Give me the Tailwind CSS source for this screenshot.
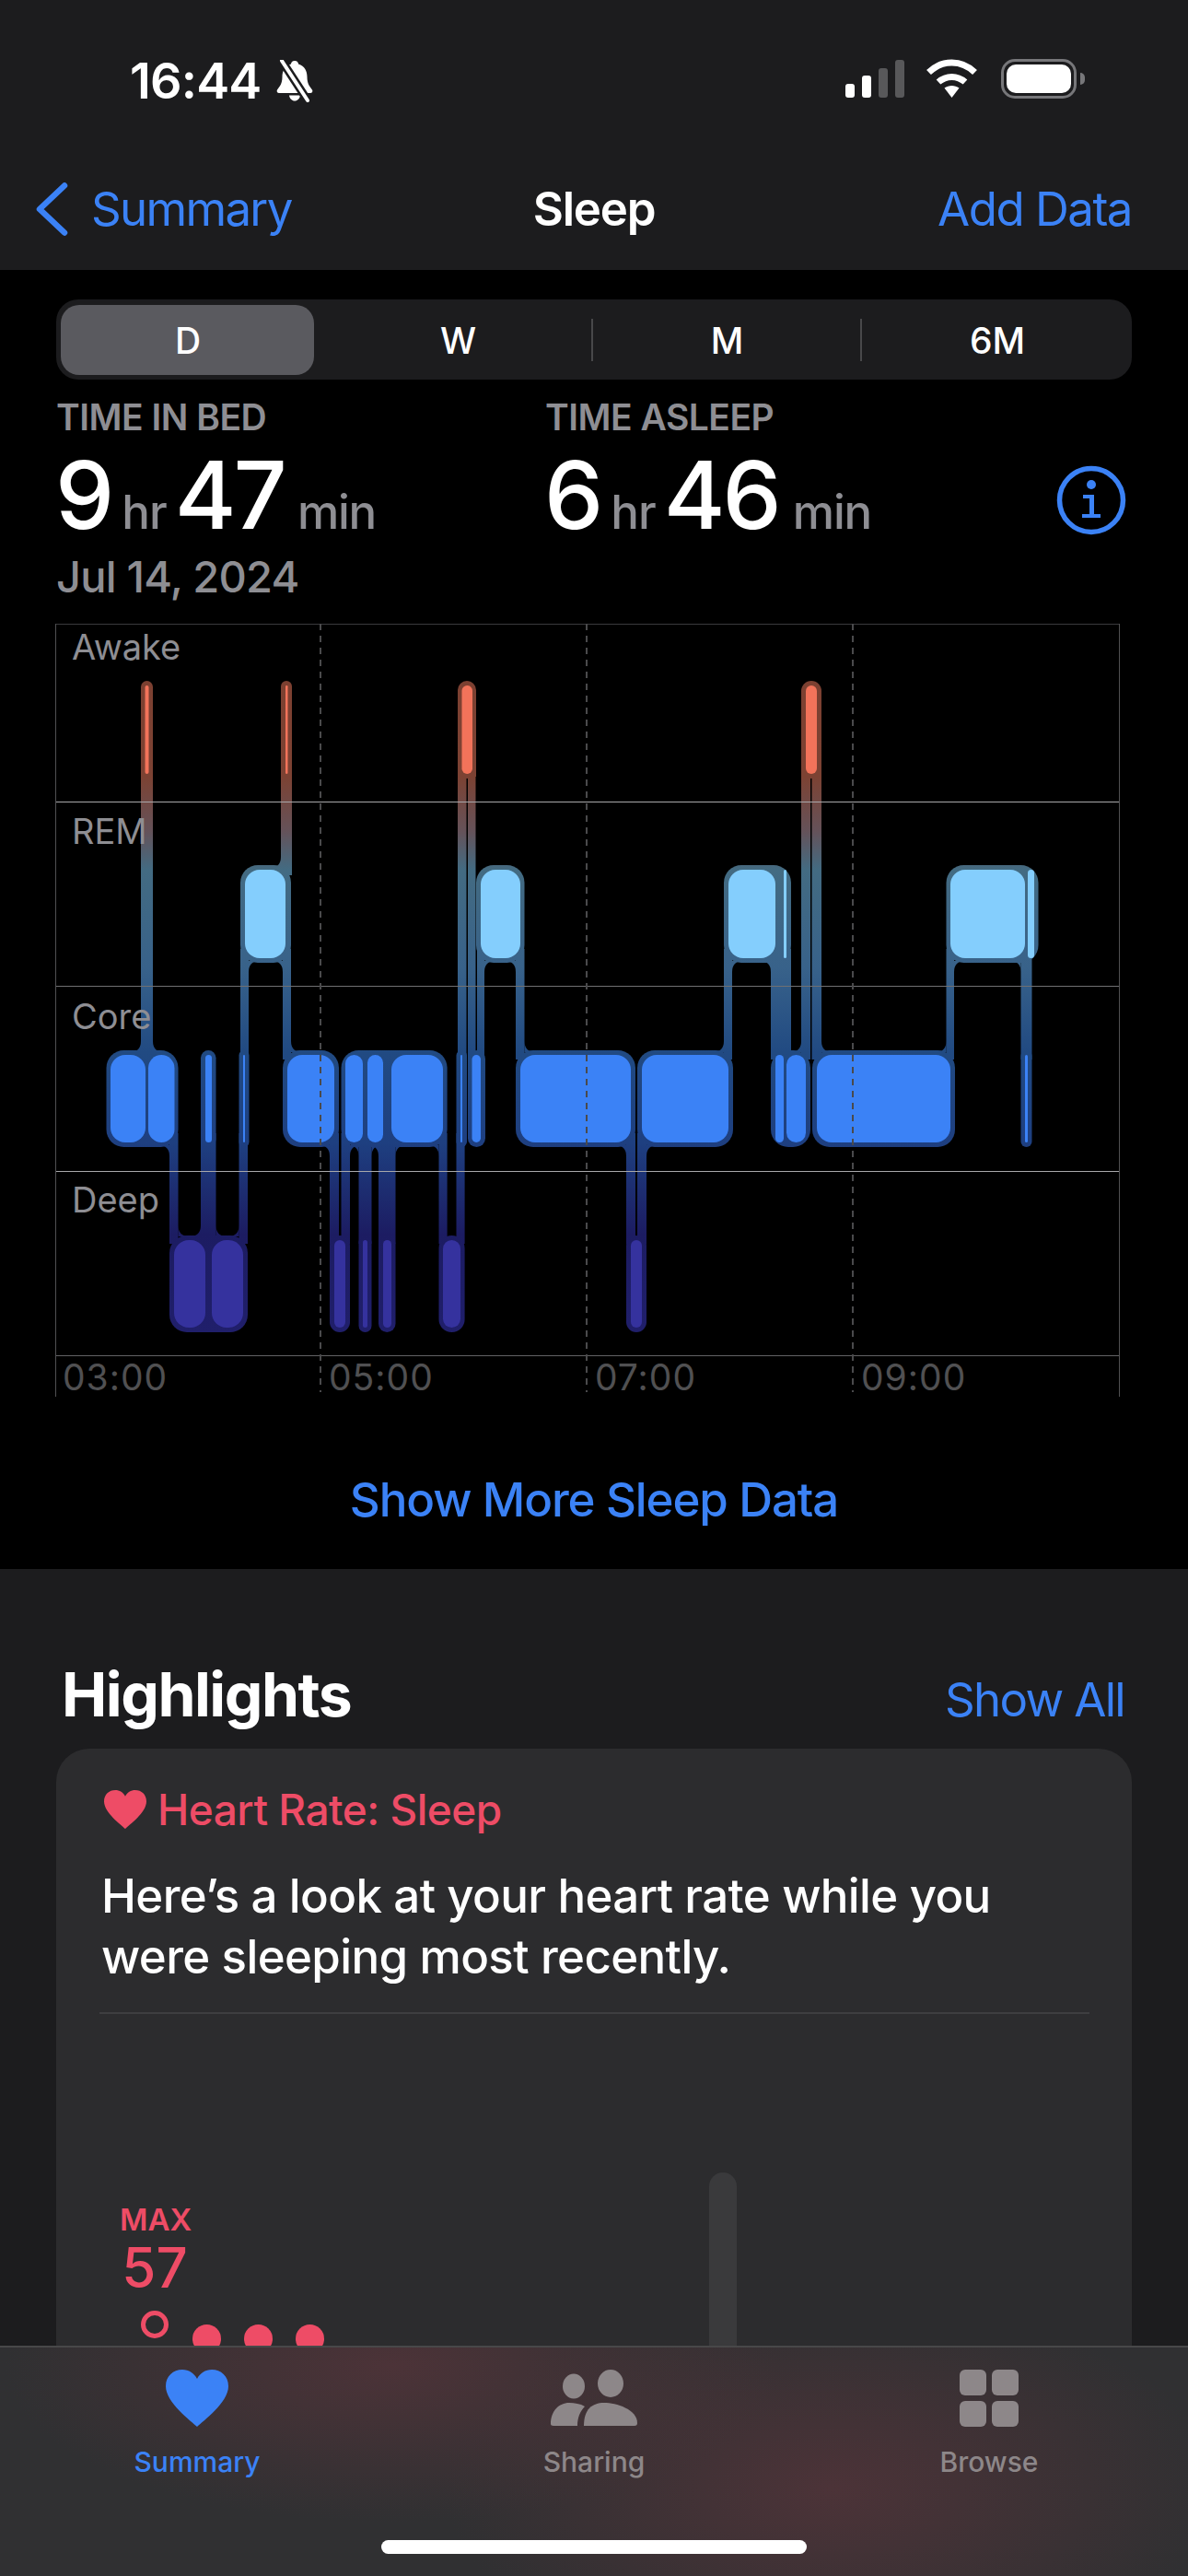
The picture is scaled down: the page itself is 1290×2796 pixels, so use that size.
<!DOCTYPE html>
<html lang="en">
<head>
    <meta charset="UTF-8">
    <title>Sleep</title>
    <script src="https://cdn.jsdelivr.net/npm/@tailwindcss/browser@4"></script>
</head>
<body class="bg-black">
<div class="relative w-[1290px] h-[2796px] overflow-hidden bg-[#1c1c1e] font-[Inter,sans-serif] text-white">

    <!-- Status bar + nav -->
    <header class="h-[293px] bg-[#1c1c1e]">
        <div class="h-[187px] flex items-start justify-between pl-[141px] pr-[112px] pt-[60px]">
            <div class="flex items-center gap-[14px]">
                <span class="text-[54px] leading-[56px] font-semibold tracking-[-0.800px]">16:44</span>
                <svg width="44" height="46" viewBox="0 0 44 46" fill="none">
                    <path d="M22 1c2.500 0 4 1.800 4 3.500 7 2 9.500 8 9.500 14 0 7 2.500 10 5.500 14 1 1.500 0 3.500-2 3.500H5c-2 0-3-2-2-3.500 3-4 5.500-7 5.500-14 0-6 2.500-12 9.500-14C18 2.800 19.500 1 22 1z" fill="#fff"/>
                    <path d="M16 38.500h12c-.5 3.500-3 6-6 6s-5.500-2.500-6-6z" fill="#fff"/>
                    <path d="M8 1l28 43" stroke="#1c1c1e" stroke-width="9"/>
                    <path d="M8 1l28 43" stroke="#fff" stroke-width="4" stroke-linecap="round"/>
                </svg>
            </div>
            <div class="flex items-start">
                <div class="flex items-end gap-[8px] h-[41px] mt-[5px]">
                    <div class="w-[10px] h-[15px] rounded-[3px] bg-white"></div>
                    <div class="w-[10px] h-[24px] rounded-[3px] bg-white"></div>
                    <div class="w-[10px] h-[32px] rounded-[3px] bg-[#58585a]"></div>
                    <div class="w-[10px] h-[41px] rounded-[3px] bg-[#58585a]"></div>
                </div>
                <svg class="ml-[23px] mt-[4px]" width="57" height="42" viewBox="0 0 57 42" fill="none">
                    <path d="M3.500 14.500C18 .5 39 .5 53.500 14.500" stroke="#fff" stroke-width="7"/>
                    <path d="M14 25c8.500-7.500 20.500-7.500 29 0" stroke="#fff" stroke-width="7"/>
                    <path d="M20.500 31.500c4.500-3.500 11.500-3.500 16 0L28.500 42z" fill="#fff"/>
                </svg>
                <div class="ml-[25px] mt-[4px] w-[82px] h-[43px] rounded-[15px] border-[3px] border-[#77777a] p-[3px]">
                    <div class="w-full h-full rounded-[10px] bg-white"></div>
                </div>
                <div class="ml-[4px] mt-[19px] w-[5px] h-[13px] rounded-r-full bg-[#77777a]"></div>
            </div>
        </div>
        <nav class="relative h-[80px] flex items-center justify-between pl-[38px] pr-[61px]">
            <div class="flex items-center gap-[25px] text-[#3b82f6]">
                <svg width="36" height="58" viewBox="0 0 36 58" fill="none"><path d="M32 3.500L5 29l27 25.500" stroke="#3b82f6" stroke-width="6.500" stroke-linecap="round" stroke-linejoin="round"/></svg>
                <span class="text-[51px] leading-[60px] tracking-[-1.700px]">Summary</span>
            </div>
            <span class="absolute left-0 right-0 text-center text-[51px] leading-[60px] font-semibold tracking-[-1.200px]">Sleep</span>
            <span class="text-[51px] leading-[60px] text-[#3b82f6] tracking-[-1.500px]">Add Data</span>
        </nav>
    </header>

    <!-- Sleep summary -->
    <section class="h-[1410px] bg-black">
        <div class="mx-[61px] mt-0 pt-[32px]">
            <div class="relative h-[87px] w-[1168px] rounded-[24px] bg-[#1c1c1e] grid grid-cols-4 items-center text-center text-[39px] font-medium pt-[4px]">
                <div class="absolute left-[5px] top-[6px] w-[275px] h-[76px] rounded-[20px] bg-[#5a5a5f]"></div>
                <div class="absolute left-[581px] top-[21px] w-[2px] h-[46px] bg-[#48484a]"></div>
                <div class="absolute left-[873px] top-[21px] w-[2px] h-[46px] bg-[#48484a]"></div>
                <span class="relative -ml-[6px]">D</span>
                <span class="relative -ml-[3px]">W</span>
                <span class="relative -ml-[3px]">M</span>
                <span class="relative">6M</span>
            </div>
        </div>
        <div class="relative mx-[61px] mt-[19px] flex">
            <div class="w-[531px]">
                <div class="text-[39px] leading-[44px] font-semibold text-[#8e8e93] tracking-[-0.500px]">TIME IN BED</div>
                <div class="flex items-baseline mt-[17px] h-[90px] -ml-[1px]">
                    <span class="text-[102px] leading-[90px] font-medium tracking-[-2px]">9</span>
                    <span class="text-[51px] font-medium text-[#8e8e93] ml-[10px] tracking-[-1px]">hr</span>
                    <span class="text-[102px] leading-[90px] font-medium ml-[9px] tracking-[-3px]">47</span>
                    <span class="text-[51px] font-medium text-[#8e8e93] ml-[14px] tracking-[-1.200px]">min</span>
                </div>
            </div>
            <div>
                <div class="text-[39px] leading-[44px] font-semibold text-[#8e8e93] tracking-[-0.500px]">TIME ASLEEP</div>
                <div class="flex items-baseline mt-[17px] h-[90px] -ml-[1px]">
                    <span class="text-[102px] leading-[90px] font-medium tracking-[-2px]">6</span>
                    <span class="text-[51px] font-medium text-[#8e8e93] ml-[10px] tracking-[-1px]">hr</span>
                    <span class="text-[102px] leading-[90px] font-medium ml-[9px] tracking-[-3px]">46</span>
                    <span class="text-[51px] font-medium text-[#8e8e93] ml-[15px] tracking-[-1.200px]">min</span>
                </div>
            </div>
            <svg class="absolute left-[1086px] top-[74px]" width="76" height="76" viewBox="0 0 76 76" fill="none">
                <circle cx="38" cy="38" r="34.500" stroke="#3b82f6" stroke-width="5.500"/>
                <circle cx="38" cy="21" r="5" fill="#3b82f6"/>
                <path d="M29 32h12v21h7v4H28v-4h8V36h-7z" fill="#3b82f6"/>
            </svg>
        </div>
        <div class="mx-[61px] mt-[17px] text-[47px] leading-[54px] font-medium text-[#8e8e93] tracking-[-0.800px]">Jul 14, 2024</div>

        <!-- Chart: drawn in page coordinates -->
        <svg id="sleepChart" class="block mt-[17px]" width="1290" height="850" viewBox="0 670 1290 850"></svg>

        <div class="mt-[78px] text-center text-[51px] leading-[60px] font-medium text-[#3b82f6] tracking-[-1.100px]">Show More Sleep Data</div>
    </section>

    <!-- Highlights -->
    <section class="px-[61px] pt-[98px]">
        <div class="flex items-baseline justify-between pr-[8px] pl-[6px] h-[97px]">
            <h2 class="text-[66px] leading-[76px] font-bold tracking-[-1.500px]">Highlights</h2>
            <span class="text-[51px] text-[#3b82f6] tracking-[-1.700px]">Show All</span>
        </div>
        <div class="h-[800px] rounded-[36px] bg-[#2c2c2e] px-[49px] pt-[40px]">
            <div class="flex items-center gap-[12px]">
                <svg class="ml-[3px]" width="46" height="42" viewBox="0 0 68 62"><path d="M34 62C28 56 0 36 0 18 0 7 8 0 18 0c7 0 13 4 16 10 3-6 9-10 16-10 10 0 18 7 18 18 0 18-28 38-34 44z" fill="#ee4c66"/></svg>
                <span class="text-[46px] leading-[52px] font-medium text-[#ee4c66] tracking-[-0.500px]">Heart Rate: Sleep</span>
            </div>
            <p class="mt-[35px] text-[51px] leading-[66px] font-medium tracking-[-0.620px]">Here’s a look at your heart rate while you<br>were sleeping most recently.</p>
            <div class="mt-[27px] -mx-[2px] w-[1075px] h-[2px] bg-[#3e3e40]"></div>
            <div class="relative h-[400px]">
                <div class="absolute left-[660px] top-[172px] w-[30px] h-[260px] rounded-t-full bg-[#3a3a3c]"></div>
                <div class="absolute left-[20px] top-[206px] w-[76px] text-center text-[#ee4c66]">
                    <div class="text-[33px] leading-[34px] font-semibold">MAX</div>
                    <div class="text-[60px] leading-[70px] font-medium">57</div>
                </div>
                <div class="absolute left-[43px] top-[322px] w-[30px] h-[30px] rounded-full border-[5px] border-[#ee4c66]"></div>
                <div class="absolute left-[99px] top-[337px] flex gap-[25px]">
                    <div class="w-[31px] h-[31px] rounded-full bg-[#ee4c66]"></div>
                    <div class="w-[31px] h-[31px] rounded-full bg-[#ee4c66]"></div>
                    <div class="w-[31px] h-[31px] rounded-full bg-[#ee4c66]"></div>
                </div>
            </div>
        </div>
    </section>

    <!-- Tab bar overlays the scrolling content -->
    <footer class="absolute left-0 right-0 bottom-0 h-[250px] border-t-[2px] border-[#484849] bg-[#303032] bg-[radial-gradient(ellipse_420px_170px_at_33%_8%,#4c3338,transparent),radial-gradient(ellipse_420px_210px_at_70%_62%,#4c3338,transparent)]">
        <div class="absolute left-[94px] top-[24px] w-[240px] flex flex-col items-center">
            <svg width="68" height="62" viewBox="0 0 68 62"><path d="M34 62C28 56 0 36 0 18 0 7 8 0 18 0c7 0 13 4 16 10 3-6 9-10 16-10 10 0 18 7 18 18 0 18-28 38-34 44z" fill="#3b82f6"/></svg>
            <span class="mt-[20px] text-[30px] leading-[36px] font-medium text-[#3b82f6]">Summary</span>
        </div>
        <div class="absolute left-[525px] top-[24px] w-[240px] flex flex-col items-center">
            <svg width="94" height="62" viewBox="0 0 94 62">
                <ellipse cx="65" cy="15" rx="14" ry="15" fill="#8d8789"/>
                <ellipse cx="25" cy="18" rx="12" ry="13.500" fill="#8d8789"/>
                <path d="M36 61c0-18 9-25 22-25s36 7 36 22c0 2-1 3-3 3z" fill="#8d8789"/>
                <path d="M0 59c0-14 9-23 20-23 6 0 12 1 17 4-5 5-8 12-8 21H3c-2 0-3-1-3-2z" fill="#8d8789"/>
            </svg>
            <span class="mt-[20px] text-[30px] leading-[36px] font-medium text-[#8d8789]">Sharing</span>
        </div>
        <div class="absolute left-[954px] top-[24px] w-[240px] flex flex-col items-center">
            <div class="grid grid-cols-2 gap-[6px]">
                <div class="w-[29px] h-[28px] rounded-[6px] bg-[#8d8789]"></div>
                <div class="w-[29px] h-[28px] rounded-[6px] bg-[#8d8789]"></div>
                <div class="w-[29px] h-[28px] rounded-[6px] bg-[#8d8789]"></div>
                <div class="w-[29px] h-[28px] rounded-[6px] bg-[#8d8789]"></div>
            </div>
            <span class="mt-[20px] text-[30px] leading-[36px] font-medium text-[#8d8789]">Browse</span>
        </div>
        <div class="absolute left-[414px] top-[209px] w-[462px] h-[15px] rounded-full bg-white"></div>
    </footer>
</div>

<script>
    // Sleep chart data, all in page pixels
    const AWAKE = [744, 840], REM = [944, 1040], CORE = [1145, 1240], DEEP = [1346, 1441];
    const row = (r) => [r[0] - 5, r[1] + 5];

    // outer halos: x1, x2, row
    const halos = [
        [153,166,AWAKE],[305,317,AWAKE],[497,517,AWAKE],[870,892,AWAKE],
        [261,316,REM],[517,569.5,REM],[786,859,REM],[1027.5,1127.5,REM],
        [115.5,193.5,CORE],[218,234.5,CORE],[259.5,270.5,CORE],[307,368,CORE],[370.5,485.6,CORE],
        [495.5,507,CORE],[508,527,CORE],[560,690,CORE],[692,796,CORE],[837,880,CORE],[882,1037,CORE],[1108.5,1120.5,CORE],
        [184,269,DEEP],[358,380,DEEP],[389.5,403.5,DEEP],[411,429.5,DEEP],[476.5,504.6,DEEP],[680,702,DEEP]
    ];

    // vertical connectors between rows
    const legs = [
        [153,166,830,1150],[305,317,830,950],[261,270,1030,1150],[307,316,1030,1150],
        [497,517,825,843],[497,506.5,843,1150],[508,516.5,843,1150],[518,526,1030,1150],[560,569.5,1030,1150],
        [786,795,1030,1150],[837,859,1030,1150],[870,892,825,843],[870,880,843,1150],[881.5,892,843,1150],
        [1027.5,1036,1030,1150],[1108.5,1120.5,1030,1150],
        [184,193.5,1230,1350],[218,234.5,1230,1350],[259.5,269,1230,1350],
        [358,368,1230,1350],[370.5,380,1230,1350],[389.5,403.5,1230,1350],[411,429.5,1230,1350],
        [476.5,485.6,1230,1350],[495.5,504.6,1230,1350],[680,690,1230,1350],[692,702,1230,1350]
    ];

    // concave corners: x, y, dx, dy
    const fillets = [
        [153,1142,-1,-1],[166,1142,1,-1],[305,942,-1,-1],[270,1043,1,1],[307,1043,-1,1],[316,1142,1,-1],
        [526,1043,1,1],[560,1043,-1,1],[569.5,1142,1,-1],[795,1043,1,1],[837,1043,-1,1],[786,1142,-1,-1],
        [870,1142,-1,-1],[892,1142,1,-1],[1036,1043,1,1],[1108.5,1043,-1,1],[1027.5,1142,-1,-1],
        [184,1243,-1,1],[358,1243,-1,1],[380,1243,1,1],[389.5,1243,-1,1],[403.5,1243,1,1],[411,1243,-1,1],
        [429.5,1243,1,1],[476.5,1243,-1,1],[680,1243,-1,1],[702,1243,1,1],
        [193.5,1342,1,-1],[218,1342,-1,-1],[234.5,1342,1,-1],[259.5,1342,-1,-1]
    ];

    // bright segments: x1, x2, row, colour
    const A = '#f2735a', R = '#84cefd', C = '#3b82f6', D = '#35329e';
    const bars = [
        [157.5,161.5,AWAKE,A],[310,312.5,AWAKE,A],[501.5,513,AWAKE,A],[875,887,AWAKE,A],
        [266,310,REM,R],[522,565,REM,R],[791,842,REM,R],[851,854,REM,R],[1032,1113,REM,R],[1116,1123,REM,R],
        [120,158,CORE,C],[161,189.5,CORE,C],[223,230,CORE,C],[264,266,CORE,C],[312,363,CORE,C],
        [375,394,CORE,C],[399,416,CORE,C],[425,481,CORE,C],[500,502,CORE,C],[512.5,522,CORE,C],
        [565,685,CORE,C],[697,791,CORE,C],[842,851,CORE,C],[854,875,CORE,C],[887,1032,CORE,C],[1113,1116,CORE,C],
        [189,223,DEEP,D],[230,264,DEEP,D],[363,375,DEEP,D],[394,399,DEEP,D],[416,425,DEEP,D],[481,500,DEEP,D],[685,697,DEEP,D]
    ];

    const rx = (w, max) => Math.min(w / 2, max);
    let s = `<defs><linearGradient id="halo" gradientUnits="userSpaceOnUse" x1="0" y1="739" x2="0" y2="1446">
        <stop offset="0" stop-color="#7c4031"/><stop offset="0.147" stop-color="#7c4233"/>
        <stop offset="0.23" stop-color="#655259"/><stop offset="0.29" stop-color="#436b82"/>
        <stop offset="0.44" stop-color="#38628a"/><stop offset="0.57" stop-color="#214a82"/>
        <stop offset="0.71" stop-color="#1e3f80"/><stop offset="0.85" stop-color="#1c1c62"/>
        <stop offset="1" stop-color="#201f6b"/></linearGradient></defs>`;

    halos.forEach(([x1, x2, r]) => {
        const [y1, y2] = row(r);
        s += `<rect x="${x1}" y="${y1}" width="${x2 - x1}" height="${y2 - y1}" rx="${rx(x2 - x1, 19)}" fill="url(#halo)"/>`;
    });
    legs.forEach(([x1, x2, y1, y2]) => {
        s += `<rect x="${x1}" y="${y1}" width="${x2 - x1}" height="${y2 - y1}" fill="url(#halo)"/>`;
    });
    fillets.forEach(([x, y, dx, dy]) => {
        const r = 12;
        s += `<path d="M${x} ${y}L${x + dx * r} ${y}Q${x} ${y} ${x} ${y + dy * r}Z" fill="url(#halo)"/>`;
    });
    bars.forEach(([x1, x2, r, c]) => {
        s += `<rect x="${x1}" y="${r[0]}" width="${x2 - x1}" height="${r[1] - r[0]}" rx="${rx(x2 - x1, 16)}" fill="${c}"/>`;
    });

    // grid over the bars
    [[677,'#3a3a3c'],[870,'#a8a8aa'],[1070,'#707072'],[1271,'#a8a8aa'],[1471,'#626264']].forEach(([y, c]) => {
        s += `<line x1="60" x2="1215" y1="${y + 0.5}" y2="${y + 0.5}" stroke="${c}" stroke-width="1"/>`;
    });
    [60, 1215].forEach((x) => { s += `<line x1="${x + 0.5}" x2="${x + 0.5}" y1="677" y2="1516" stroke="#505052" stroke-width="1"/>`; });
    [348, 637, 926].forEach((x) => {
        s += `<line x1="${x}" x2="${x}" y1="677" y2="1511" stroke="#4a4a4c" stroke-width="2" stroke-dasharray="7 6"/>`;
    });

    // labels
    [['Awake',716],['REM',916],['Core',1117],['Deep',1316]].forEach(([t, y]) => {
        s += `<text x="78" y="${y}" font-family="Inter" font-size="38" fill="#8e8e93">${t}</text>`;
    });
    [['03:00',68],['05:00',357],['07:00',646],['09:00',935]].forEach(([t, x]) => {
        s += `<text x="${x}" y="1509" font-family="Inter" font-size="39" letter-spacing="1" fill="#505052">${t}</text>`;
    });
    document.getElementById('sleepChart').innerHTML = s;
</script>
</body>
</html>
